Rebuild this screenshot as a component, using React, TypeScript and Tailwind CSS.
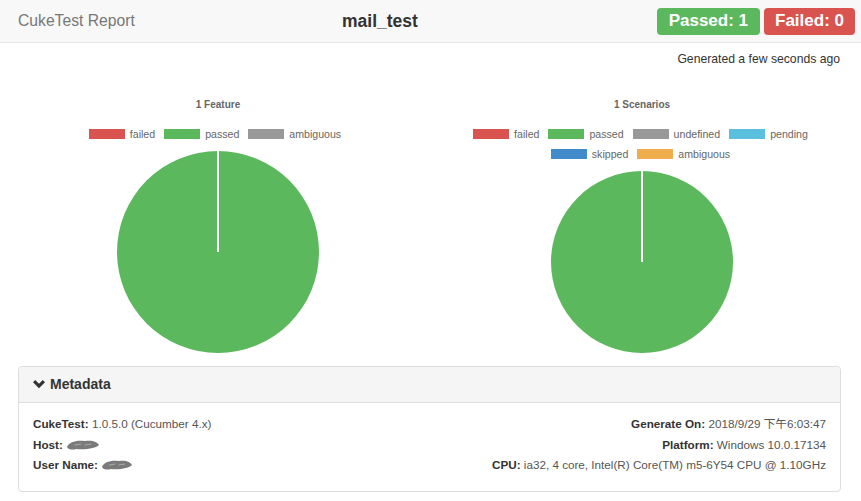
const font = { fontFamily: '"Liberation Sans", Arial, "Noto Sans CJK SC", sans-serif' };

type Item = { label: string; color: string };

function Legend({ rows }: { rows: Item[][] }) {
  return (
    <div className="flex flex-col items-center gap-[10px]">
      {rows.map((row, i) => (
        <div key={i} className="flex items-center gap-[9px] h-[10px]">
          {row.map((it) => (
            <div key={it.label} className="flex items-center gap-[5px]">
              <span className={`block w-[36px] h-[10px] ${it.color}`} />
              <span className="text-[10.6px] leading-none text-[#666]">{it.label}</span>
            </div>
          ))}
        </div>
      ))}
    </div>
  );
}

function Pie({ r }: { r: number }) {
  const s = r * 2 + 2;
  return (
    <svg width={s} height={s} viewBox={`0 0 ${s} ${s}`}>
      <circle cx={r + 1} cy={r + 1} r={r} fill="#5cb85c" />
      <line x1={r + 1} y1={0} x2={r + 1} y2={r + 1} stroke="#fff" strokeWidth={2} />
    </svg>
  );
}

function Blur({ w }: { w: number }) {
  return (
    <svg width={w} height={13} viewBox={`0 0 ${w} 13`} className="inline-block align-[-2px]">
      <path
        d={`M1 9 C3 4, ${w * 0.3} 2, ${w * 0.55} 3 C${w * 0.8} 2, ${w - 3} 4, ${w - 1} 7 C${w - 4} 10, ${w * 0.6} 12, ${w * 0.3} 11 C8 12, 2 12, 1 9 Z`}
        fill="#7a7a7a"
      />
      <path d={`M${w * 0.25} 7 L${w * 0.45} 6 M${w * 0.55} 7 L${w * 0.75} 6`} stroke="#aaa" strokeWidth={1} />
    </svg>
  );
}

export default function App() {
  const red = 'bg-[#d9534f]';
  const green = 'bg-[#5cb85c]';
  const gray = 'bg-[#999999]';
  return (
    <div style={font} className="w-[861px] h-[501px] bg-white text-[#333] overflow-hidden">
      <div className="h-[43px] bg-[#f8f8f8] border-b border-[#e7e7e7] flex items-center pl-[18px] pr-[6px]">
        <span className="text-[15.7px] text-[#777] w-[324px]">CukeTest Report</span>
        <span className="text-[17.5px] font-bold text-[#333]">mail_test</span>
        <div className="ml-auto flex gap-[4px]">
          <span className="h-[27px] px-[12px] rounded-[4px] bg-[#5cb85c] text-white font-bold text-[17px] flex items-center">Passed: 1</span>
          <span className="h-[27px] px-[11px] rounded-[4px] bg-[#d9534f] text-white font-bold text-[17px] flex items-center">Failed: 0</span>
        </div>
      </div>
      <div className="text-right text-[12.2px] pr-[21px] pt-[8px] leading-[17px]">Generated a few seconds ago</div>
      <div className="flex mt-[32px]">
        <div className="w-[436px] flex flex-col items-center">
          <div className="text-[10px] font-bold text-[#666] leading-none">1 Feature</div>
          <div className="mt-[19px] mr-[6px]">
            <Legend rows={[[{ label: 'failed', color: red }, { label: 'passed', color: green }, { label: 'ambiguous', color: gray }]]} />
          </div>
          <div className="mt-[11px]">
            <Pie r={101} />
          </div>
        </div>
        <div className="w-[412px] flex flex-col items-center">
          <div className="text-[10px] font-bold text-[#666] leading-none">1 Scenarios</div>
          <div className="mt-[19px] mr-[3px]">
            <Legend
              rows={[
                [
                  { label: 'failed', color: red },
                  { label: 'passed', color: green },
                  { label: 'undefined', color: gray },
                  { label: 'pending', color: 'bg-[#5bc0de]' },
                ],
                [
                  { label: 'skipped', color: 'bg-[#428bca]' },
                  { label: 'ambiguous', color: 'bg-[#f0ad4e]' },
                ],
              ]}
            />
          </div>
          <div className="mt-[11px]">
            <Pie r={91} />
          </div>
        </div>
      </div>
      <div className="mx-[18px] mt-[12px] border border-[#ddd] rounded-[4px] w-[823px]">
        <div className="h-[36px] bg-[#f5f5f5] border-b border-[#ddd] flex items-center pl-[14px] gap-[5px] rounded-t-[4px]">
          <svg width="12" height="9" viewBox="0 0 12 9">
            <path d="M0 2.2 L2.2 0 L6 3.8 L9.8 0 L12 2.2 L6 8.2 Z" fill="#333" />
          </svg>
          <span className="text-[14px] font-bold">Metadata</span>
        </div>
        <div className="flex justify-between px-[14px] pt-[11px] pb-[15px] text-[11.7px] leading-[20.5px] text-[#555]">
          <div>
            <div><b className="text-[#333]">CukeTest:</b> 1.0.5.0 (Cucumber 4.x)</div>
            <div><b className="text-[#333]">Host:</b> <Blur w={34} /></div>
            <div><b className="text-[#333]">User Name:</b> <Blur w={32} /></div>
          </div>
          <div className="text-right">
            <div><b className="text-[#333]">Generate On:</b> 2018/9/29 下午6:03:47</div>
            <div><b className="text-[#333]">Platform:</b> Windows 10.0.17134</div>
            <div><b className="text-[#333]">CPU:</b> ia32, 4 core, Intel(R) Core(TM) m5-6Y54 CPU @ 1.10GHz</div>
          </div>
        </div>
      </div>
    </div>
  );
}
